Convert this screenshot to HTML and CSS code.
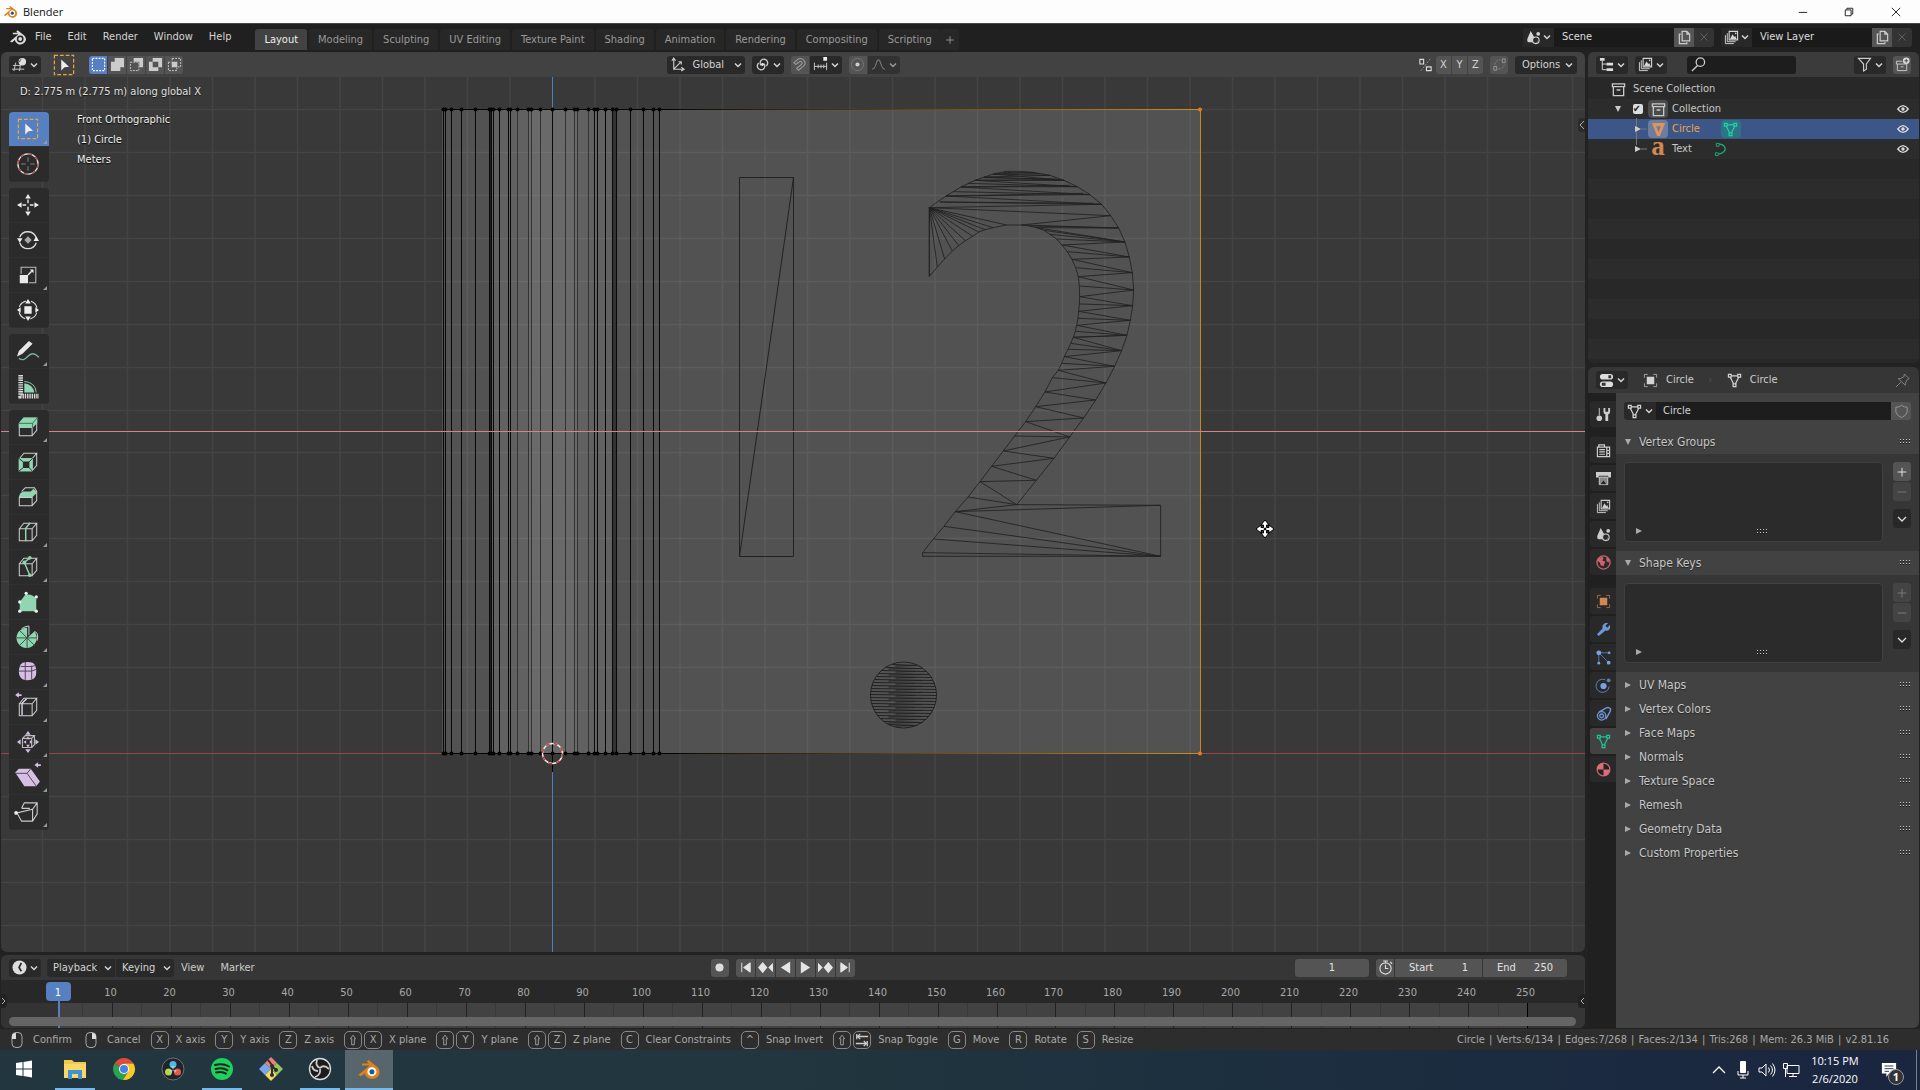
FILE: index.html
```html
<!DOCTYPE html>
<html lang="en">
<head>
<meta charset="utf-8">
<title>Blender</title>
<link rel="stylesheet" href="styles.css">
</head>
<body>
<svg class="sprite" aria-hidden="true">
  <symbol id="chev" viewBox="0 0 8 8"><path d="M1 2.5l3 3 3-3" fill="none" stroke="currentColor" stroke-width="1.5"/></symbol>
  <symbol id="blender" viewBox="0 0 18 18"><path d="M1 13.5L9.5 6.3H3.8V4.8h5L7.3 3.4 8.6 2.3l6.6 5.2a5.6 5.2 0 1 1-9.4 4.6L3 14.5z" fill="currentColor"/><circle cx="11.2" cy="11" r="3.4" class="b-ring"/><circle cx="11.2" cy="11" r="1.9" class="b-eye"/></symbol>
  <symbol id="scene" viewBox="0 0 16 16"><path d="M5 1l4 7-1 5H3C1 13 1 10 2 8z" fill="currentColor"/><circle cx="10.5" cy="11" r="3.5" fill="#2a2a2a" stroke="currentColor" stroke-width="1.2"/><circle cx="13" cy="4" r="2" fill="currentColor"/><path d="M10 13.5a3 3 0 0 0 3-3l-1 2z" fill="currentColor"/></symbol>
  <symbol id="layer" viewBox="0 0 16 16"><path d="M1.5 5.500v9h9M3.500 3.500v9h9" fill="none" stroke="currentColor"/><path d="M5.500 1.500h9v9h-9z" fill="#2a2a2a" stroke="currentColor" stroke-width="1.200"/><path d="M6.500 9.500l2.500-5 2 3 1-1 1.500 3z" fill="currentColor"/><circle cx="12.500" cy="3.500" r=".9" fill="currentColor"/></symbol>
  <symbol id="copy" viewBox="0 0 16 16"><path d="M5.500 1.500h5l3 3v7h-8zM10.500 1.500v3h3" fill="none" stroke="currentColor" stroke-width="1.300"/><path d="M4 4.500H2.500v10h8V13" fill="none" stroke="currentColor" stroke-width="1.300"/></symbol>
  <symbol id="close" viewBox="0 0 16 16"><path d="M4 4l8 8M12 4l-8 8" stroke="currentColor"/></symbol>
  <symbol id="mesh" viewBox="0 0 16 16"><g fill="none" stroke="currentColor" stroke-width="1.300"><path d="M4.500 3h7M3.500 4.500l3.500 7M12.500 4.500l-3.500 7"/><path d="M1.500 1.500h3v3h-3zM11.500 1.500h3v3h-3zM6.500 11.500h3v3h-3z"/></g></symbol>
  <symbol id="collection" viewBox="0 0 16 16"><path d="M1.500 2h13v3h-13zM2.500 5v9.500h11V5M6 8.500h4" fill="none" stroke="currentColor" stroke-width="1.400"/></symbol>
  <symbol id="eye" viewBox="0 0 16 12"><path d="M1 6q7-9 14 0q-7 9-14 0z" fill="none" stroke="#ddd" stroke-width="1.700"/><circle cx="8" cy="6" r="2.300" fill="#ddd"/></symbol>
  <symbol id="right" viewBox="0 0 8 8"><path d="M1 1l6 3-6 3z" fill="currentColor"/></symbol>
  <symbol id="down" viewBox="0 0 8 8"><path d="M1 1h6L4 7z" fill="currentColor"/></symbol>
  <symbol id="grip" viewBox="0 0 11 6"><path d="M0 .5h11M0 3.500h11" stroke="#ccc" stroke-dasharray="1 2"/><path d="M0 1.500h11M0 4.500h11" stroke="#151515" stroke-dasharray="1 2"/></symbol>
  <symbol id="plus" viewBox="0 0 16 16"><path d="M8 3v10M3 8h10" stroke="currentColor" stroke-width="1.200"/></symbol>
  <symbol id="minus" viewBox="0 0 16 16"><path d="M3 8h10" stroke="currentColor" stroke-width="1.200"/></symbol>
  <symbol id="shift" viewBox="0 0 16 16"><path d="M8 2.500l3 4H9.500v7h-3v-7H5z" fill="none" stroke="currentColor"/></symbol>
  <symbol id="objframe" viewBox="0 0 16 16"><path d="M1.500 5V1.500H5M11 1.500h3.500V5M14.500 11v3.500H11M5 14.500H1.500V11" fill="none" stroke="currentColor" opacity=".7"/><path d="M4 4h8v8H4z" fill="currentColor"/></symbol>
  <symbol id="cube" viewBox="0 0 24 24"><path d="M2.500 8.500h14v13h-14zM2.500 8.500l5-6h14l-5 6M21.500 2.500v13l-5 6" fill="none" stroke="#d0d0d0" stroke-width="1.100"/></symbol>
  <symbol id="boxsel" viewBox="0 0 24 24"><path d="M1.500 1.500h21v21h-21z" fill="none" stroke="#e8a83d" stroke-width="1.300" stroke-dasharray="4 2.200"/><path d="M9 6v12l3.500-3.500 5-.5z" fill="#eee"/></symbol>
</svg>

<header class="titlebar">
  <svg class="i16 blender-color"><use href="#blender"/></svg><span>Blender</span>
  <div class="winbtns">
    <button aria-label="Minimize"><svg viewBox="0 0 12 12"><path d="M1 6.500h10" stroke="#000"/></svg></button>
    <button aria-label="Restore"><svg viewBox="0 0 12 12"><path d="M1.500 3.500h7v7h-7zM3.500 3V1.500h7v7H9" fill="none" stroke="#000"/></svg></button>
    <button aria-label="Close"><svg viewBox="0 0 12 12"><path d="M1 1l10 10M11 1L1 11" stroke="#000"/></svg></button>
  </div>
</header>

<nav class="topbar">
  <svg class="i18 blender-white"><use href="#blender"/></svg>
  <div class="menus"><button>File</button><button>Edit</button><button>Render</button><button>Window</button><button>Help</button></div>
  <div class="tabs"><button class="on">Layout</button><button>Modeling</button><button>Sculpting</button><button>UV Editing</button><button>Texture Paint</button><button>Shading</button><button>Animation</button><button>Rendering</button><button>Compositing</button><button>Scripting</button><button class="add" aria-label="Add workspace"><svg class="i12"><use href="#plus" /></svg></button></div>
  <div class="idrow">
    <div class="idblock"><button class="pick" aria-label="Browse scene"><svg class="i16"><use href="#scene"/></svg><svg class="i8"><use href="#chev"/></svg></button><input aria-label="Scene name" value="Scene"><button class="lit" aria-label="New scene"><svg class="i16"><use href="#copy"/></svg></button><button class="dim" aria-label="Remove scene"><svg class="i14"><use href="#close"/></svg></button></div>
    <div class="idblock"><button class="pick" aria-label="Browse view layer"><svg class="i16"><use href="#layer"/></svg><svg class="i8"><use href="#chev"/></svg></button><input aria-label="View layer name" value="View Layer"><button class="lit" aria-label="New view layer"><svg class="i16"><use href="#copy"/></svg></button><button class="dim" aria-label="Remove view layer"><svg class="i14"><use href="#close"/></svg></button></div>
  </div>
</nav>

<main class="work">
  <div class="left">
    <section class="view3d">
      <div class="viewhead">
        <div class="grp start">
          <button class="drop" aria-label="Editor type"><svg class="i16" viewBox="0 0 16 16"><path d="M4 6L2 15M9 8l-1 7M1 9h8M0 13h13" stroke="#ccc" fill="none"/><circle cx="11" cy="5" r="4" fill="#ddd"/><path d="M10 2.500a3 3 0 0 0-2 3" stroke="#444" fill="none"/></svg><svg class="i8"><use href="#chev"/></svg></button>
          <svg class="i22"><use href="#boxsel"/></svg>
          <div class="seg modes">
            <button class="blue" aria-label="Set"><svg class="i16" viewBox="0 0 16 16"><path d="M1.500 1.500h13v13h-13z" fill="none" stroke="#fff" stroke-width="1.300" stroke-dasharray="2 1.300"/></svg></button>
            <button aria-label="Extend"><svg class="i16" viewBox="0 0 16 16"><path d="M5 1h10v10h-4v4H1V5h4z" fill="#ccc"/></svg></button>
            <button aria-label="Subtract"><svg class="i16" viewBox="0 0 16 16"><path d="M5 1h10v10h-4V5H5z" fill="#ccc"/><path d="M1.500 5.500h9v9h-9z" fill="none" stroke="#ccc" stroke-dasharray="2 1.200"/></svg></button>
            <button aria-label="Invert"><svg class="i16" viewBox="0 0 16 16"><path d="M5 1h10v10h-4v4H1V5h4zM5 5v6h6V5z" fill="#ccc" fill-rule="evenodd"/></svg></button>
            <button aria-label="Intersect"><svg class="i16" viewBox="0 0 16 16"><path d="M5 5h6v6H5z" fill="#ccc"/><path d="M5.500 1.500h9v9h-3M1.500 5.500H5M1.500 5.500v9h9v-3M5.500 1.500V5" fill="none" stroke="#ccc" stroke-dasharray="2 1.200"/></svg></button>
          </div>
        </div>
        <div class="grp middle">
          <button class="drop global"><svg class="i16" viewBox="0 0 16 16"><path d="M4 2v11h10M4 13l8-8M2 4l2-3 2 3M9 5h3v3M12 11l3 2-3 2" fill="none" stroke="#ccc" stroke-width="1.200"/></svg><span>Global</span><svg class="i8"><use href="#chev"/></svg></button>
          <button class="drop" aria-label="Pivot point"><svg class="i16" viewBox="0 0 16 16"><path d="M6.500 9A4 4 0 1 1 12 9.500M9.500 7A4 4 0 1 1 4 6.500" fill="none" stroke="#ccc" stroke-width="1.400"/><circle cx="8" cy="8" r="1.500" fill="#eee"/></svg><svg class="i8"><use href="#chev"/></svg></button>
          <div class="seg"><button aria-label="Snap"><svg class="i16" viewBox="0 0 16 16"><path d="M2 6l5-4c6-2 9 5 5 8l-5 4-2-2 5-4c2-2 0-4-2-3L4 8z" fill="none" stroke="#999" stroke-width="1.200"/></svg></button><button class="drop" aria-label="Snap to"><svg class="i16" viewBox="0 0 16 16"><path d="M1.500 6v8M14.500 6v8M5.500 8v4M8.500 8v4M11.500 8v4M1 10h14" stroke="#ccc" fill="none"/><path d="M11 0h4v4h-4z" fill="#eee"/></svg><svg class="i8"><use href="#chev"/></svg></button></div>
          <div class="seg"><button aria-label="Proportional editing"><svg class="i16" viewBox="0 0 16 16"><circle cx="8" cy="8" r="6.500" fill="none" stroke="#777"/><circle cx="8" cy="8" r="2.200" fill="#ccc"/></svg></button><button class="drop faded" aria-label="Falloff"><svg class="i16" viewBox="0 0 16 16"><path d="M1 13c5 0 4-10 7-10s2 10 7 10" fill="none" stroke="#999" stroke-width="1.200"/></svg><svg class="i8"><use href="#chev"/></svg></button></div>
        </div>
        <div class="grp end">
          <svg class="i16" viewBox="0 0 16 16"><path d="M2 2.500h4v5H2zM9 10.500h5v4H9z" fill="none" stroke="#ddd" stroke-width="1.200"/><path d="M13 2L3 15" stroke="#999" stroke-dasharray="2 1.500"/></svg>
          <div class="seg xyz"><button>X</button><button>Y</button><button>Z</button></div>
          <div class="seg one"><button aria-label="Auto merge"><svg class="i16" viewBox="0 0 16 16"><path d="M11 2h3v4h-3zM2 10h3v4H2z" fill="none" stroke="#999"/><path d="M3 8q1-5 6-5M7 13q5-1 6-5" fill="none" stroke="#888" stroke-dasharray="2 1.500"/></svg></button></div>
          <button class="drop options"><span>Options</span><svg class="i8"><use href="#chev"/></svg></button>
        </div>
      </div>
      <div class="canvas">
        <svg class="scene" id="scene3d" aria-label="3D viewport">
          <defs>
            <linearGradient id="edge" gradientUnits="userSpaceOnUse" x1="660" y1="0" x2="1200" y2="0"><stop offset="0" stop-color="#000"/><stop offset=".12" stop-color="#1e1508"/><stop offset="1" stop-color="#cf8c1f"/></linearGradient>
          </defs>
          <rect x="442" y="32" width="758" height="644" fill="#525252"/>
          <rect x="492" y="32" width="120" height="644" fill="#616161"/>
          <rect x="528" y="32" width="49" height="644" fill="#696969"/>
          <g id="grid"></g>
          <path d="M0 676.500H442M1200 676.500H4000" stroke="#9c424a"/>
          <path d="M552.500 0v32M552.500 680V2000" stroke="#4a80bd"/>
          <g id="edges"></g>
          <path d="M442 32.500H660M442 676.500H660" stroke="#000"/>
          <path d="M660 32h540v1H660zM660 676h540v1H660z" fill="url(#edge)"/>
          <path d="M1200.500 32v645" stroke="#c9871a"/>
          <circle cx="1200" cy="32.500" r="2" fill="#f07818"/><circle cx="1200" cy="676.500" r="2" fill="#f07818"/>
          <g fill="none" stroke="#222">
            <path d="M739.500 100.500h54v379h-54zM739.500 479.500l54-379"/>
            <g id="numeral" transform="translate(860 63) scale(.3333)" stroke-width="2.600"></g>
            <circle cx="903.500" cy="618" r="33"/><g id="dot"></g>
          </g>
          <path d="M0 354.500H4000" stroke="#d0848f"/>
          <path d="M552.500 667v28" stroke="#000"/>
          <circle cx="552.500" cy="676.500" r="10" fill="none" stroke="#eee" stroke-width="1.400"/><circle cx="552.500" cy="676.500" r="10" fill="none" stroke="#c8383c" stroke-width="1.400" stroke-dasharray="4 4"/>
          <g transform="translate(1265 452)" fill="#fff" stroke="#000" stroke-width="1"><path d="M0-9L4-4H1.500v2.500H4V-4L9 0 4 4V1.500H1.500V4H4L0 9-4 4h2.500V1.500H-4V4L-9 0l5-4v2.500h2.500V-4H-4z"/><circle r="1" fill="#000"/></g>
        </svg>
        <p class="hint">D: 2.775 m (2.775 m) along global X</p>
        <div class="overlay">
          <div class="toolbar" role="toolbar" aria-label="Tools">
            <div class="tools">
              <button class="blue more" aria-label="Select box"><svg class="i24"><use href="#boxsel"/></svg></button>
              <button aria-label="Cursor"><svg class="i24" viewBox="0 0 24 24"><circle cx="12" cy="12" r="11" fill="none" stroke="#ddd" stroke-width="1.500"/><circle cx="12" cy="12" r="11" fill="none" stroke="#b5484d" stroke-width="1.500" stroke-dasharray="4.300 4.300"/><path d="M12 4.500v5M12 14.500v5M4.500 12h5M14.500 12h5" stroke="#888"/></svg></button>
            </div>
            <div class="tools">
              <button aria-label="Move"><svg class="i24" viewBox="0 0 24 24"><path d="M12 0l3 5H9zM12 24l3-5H9zM0 12l5-3v6zM24 12l-5-3v6z" fill="#eee"/><path d="M12 6v4M12 14v4M6 12h4M14 12h4" stroke="#eee" stroke-width="1.500"/></svg></button>
              <button aria-label="Rotate"><svg class="i24" viewBox="0 0 24 24"><path d="M3 9a9.500 9.500 0 0 1 18 1M21 15a9.500 9.500 0 0 1-18 0" fill="none" stroke="#ddd" stroke-width="1.400"/><path d="M0 10h6l-3 5zM18 13h6l-3-5z" fill="#eee"/><path d="M12 8l4 4-4 4-4-4z" fill="#aaa"/></svg></button>
              <button class="more" aria-label="Scale"><svg class="i24" viewBox="0 0 24 24"><path d="M4.500 11V3.500h16v17H13" fill="none" stroke="#bbb" stroke-width="1.200"/><path d="M3 12h9v9H3z" fill="#e8e8e8"/><path d="M12 12l4-4" stroke="#eee" stroke-width="1.500"/><path d="M18 6v4l-4-4z" fill="#eee"/></svg></button>
              <button aria-label="Transform"><svg class="i24" viewBox="0 0 24 24"><circle cx="12" cy="12" r="10" fill="none" stroke="#ddd" stroke-width="1.200" stroke-dasharray="10 5.700" stroke-dashoffset="-3"/><path d="M8 8h8v8H8z" fill="#eee"/><path d="M12 0l3 5H9zM12 24l3-5H9zM0 12l4-3v6zM24 12l-4-3v6z" fill="#eee"/></svg></button>
            </div>
            <div class="tools">
              <button class="more" aria-label="Annotate"><svg class="i24" viewBox="0 0 24 24"><path d="M0 18l2-6L13 1l4 3L6 15z" fill="#e8e8e8"/><path d="M2 20c8 5 9-5 15-5 3 0 5 2 7 4" fill="none" stroke="#72b897" stroke-width="1.400"/></svg></button>
              <button aria-label="Measure"><svg class="i24" viewBox="0 0 24 24"><path d="M4 0v23h20" fill="none" stroke="#ddd" stroke-width="5" stroke-dasharray="1.500 1"/><path d="M8 19V9q9 1 11 10z" fill="#90d6b0"/><path d="M8 7q12 1 13 12" fill="none" stroke="#90d6b0"/></svg></button>
            </div>
            <div class="tools">
              <button class="more" aria-label="Extrude"><svg class="i24" viewBox="0 0 24 24"><use href="#cube"/><path d="M2 13V7.500l5-6h15v6l-5 5.500z" fill="#90d6b0"/><path d="M2 8h15l5-6M17 8v5" stroke="#3a6a52" fill="none"/></svg></button>
              <button aria-label="Inset"><svg class="i24" viewBox="0 0 24 24"><use href="#cube"/><path d="M2 8h15v14H2zM7 12v6h6v-6z" fill="#90d6b0" fill-rule="evenodd"/><path d="M2 8l5 4M17 8l-4 4M2 22l5-4M17 22l-4-4M7 12v6h6v-6z" stroke="#222" fill="none"/></svg></button>
              <button aria-label="Bevel"><svg class="i24" viewBox="0 0 24 24"><path d="M2.500 12.500v9h14v-9zM5 6l4-4h10l2.500 4v10l-5 5.500" fill="none" stroke="#d0d0d0" stroke-width="1.100"/><path d="M2 12q1-5 5-6h8l3-3 4 4-5 5z" fill="#90d6b0"/></svg></button>
              <button class="more" aria-label="Loop cut"><svg class="i24" viewBox="0 0 24 24"><use href="#cube"/><path d="M9.500 22V8l5-6" fill="none" stroke="#90d6b0" stroke-width="1.600"/></svg></button>
              <button class="more" aria-label="Knife"><svg class="i24" viewBox="0 0 24 24"><use href="#cube"/><path d="M14 2L8 7l6 14" fill="none" stroke="#90d6b0" stroke-width="1.600"/><g fill="#90d6b0"><circle cx="14" cy="2" r="2"/><circle cx="8" cy="7" r="2"/><circle cx="14" cy="21" r="2"/></g></svg></button>
              <button aria-label="Poly build"><svg class="i24" viewBox="0 0 24 24"><path d="M3 12l6-8q9-1 12 5v13H3z" fill="#90d6b0"/><g fill="#eee"><circle cx="3" cy="12" r="1.800"/><circle cx="10" cy="2.500" r="1.800"/><circle cx="21" cy="6.500" r="1.800"/><circle cx="3" cy="22" r="1.800"/><circle cx="21" cy="22" r="1.800"/></g></svg></button>
              <button class="more" aria-label="Spin"><svg class="i24" viewBox="0 0 24 24"><path d="M11 13V2A11 11 0 1 0 19 6z" fill="#90d6b0"/><path d="M11 13v11M0 13h22M3 5l16 16M3 21l8-8" stroke="#2e4e3e" fill="none"/><path d="M5 3q4-3 8-3v10M19 6q5 1 3 10" fill="none" stroke="#ddd"/></svg></button>
              <button class="more" aria-label="Smooth"><svg class="i24" viewBox="0 0 24 24"><path d="M6 2q6-2 11 0 4 2 4 10 0 6-4 8-6 2-11 0-4-3-4-8 0-7 4-10z" fill="#d5bfe2"/><path d="M2 11h14l5-2M9 1v20M16 5v15M4 6h12l4-1" stroke="#4a3c55" fill="none"/></svg></button>
              <button class="more" aria-label="Edge slide"><svg class="i24" viewBox="0 0 24 24"><use href="#cube"/><path d="M5.500 21V8l5-5" fill="none" stroke="#e3d3ef" stroke-width="1.500"/><path d="M-2-1l4-3v2h3v2H2v2z" fill="#d5bfe2"/></svg></button>
              <button class="more" aria-label="Shrink"><svg class="i24" viewBox="0 0 24 24"><path d="M6 8h10v10H6zM6 8l3-3h10l-3 3M19 5v10l-3 3" fill="none" stroke="#bbb" stroke-width="1.200"/><path d="M12 0l3 4H9zM12 24l3-4H9zM0 12l4-3v6zM24 12l-4-3v6zM12 6l2 3h-4zM12 18l2-3h-4zM7 12l3-2v4zM17 12l-3-2v4z" fill="#d5bfe2"/></svg></button>
              <button class="more" aria-label="Shear"><svg class="i24" viewBox="0 0 24 24"><path d="M-2 7l4-4h13l10 14-4 5H8z" fill="#d5bfe2"/><path d="M-2 8h13l10 14M11 8l4-5" fill="none" stroke="#4a3c55"/><path d="M19-1l4-3v2h3v2h-3v2z" fill="#d5bfe2"/></svg></button>
              <button class="more" aria-label="Rip"><svg class="i24" viewBox="0 0 24 24"><path d="M5 8l3-6h14v12l-5 8H5L0 13l17-4V22M17 9l5-7M5 8h9" fill="none" stroke="#ccc" stroke-width="1.200"/><circle cx="-1" cy="13" r="2" fill="#eee"/></svg></button>
            </div>
          </div>
          <div class="viewinfo"><p>Front Orthographic</p><p>(1) Circle</p><p>Meters</p></div>
        </div>
        <button class="ntab" aria-label="Show sidebar"><svg class="i8" viewBox="0 0 8 8"><path d="M6 0L2 4l4 4" fill="none" stroke="#aaa"/></svg></button>
      </div>
    </section>

    <section class="timeline">
      <div class="timehead">
        <div class="grp tleft">
          <button class="drop" aria-label="Editor type"><svg class="i16" viewBox="0 0 16 16"><circle cx="8" cy="8" r="7.500" fill="#ddd"/><path d="M10 3L7.500 8l2.500 4" fill="none" stroke="#2a2a2a" stroke-width="1.800"/></svg><svg class="i8"><use href="#chev"/></svg></button>
          <div class="seg"><button class="drop play"><span>Playback</span><svg class="i8"><use href="#chev"/></svg></button><button class="drop key"><span>Keying</span><svg class="i8"><use href="#chev"/></svg></button></div>
          <div class="menus"><button>View</button><button>Marker</button></div>
        </div>
        <div class="grp transport">
          <div class="seg one"><button aria-label="Auto keying"><svg class="i16" viewBox="0 0 16 16"><circle cx="8" cy="8" r="4.300" fill="#ddd"/></svg></button></div>
          <div class="seg six">
            <button aria-label="Jump to start"><svg class="i16" viewBox="0 0 16 16"><path d="M4 3v10M13 3L6 8l7 5z" fill="#e5e5e5" stroke="#e5e5e5"/></svg></button>
            <button aria-label="Previous keyframe"><svg class="i16" viewBox="0 0 16 16"><path d="M5 2l5 6-5 6-5-6zM16 3v10l-5-5z" fill="#e5e5e5"/></svg></button>
            <button aria-label="Play reverse"><svg class="i16" viewBox="0 0 16 16"><path d="M13 1.500v13L3 8z" fill="#e5e5e5"/></svg></button>
            <button aria-label="Play"><svg class="i16" viewBox="0 0 16 16"><path d="M3 1.500v13L13 8z" fill="#e5e5e5"/></svg></button>
            <button aria-label="Next keyframe"><svg class="i16" viewBox="0 0 16 16"><path d="M11 2l5 6-5 6-5-6zM0 3v10l5-5z" fill="#e5e5e5"/></svg></button>
            <button aria-label="Jump to end"><svg class="i16" viewBox="0 0 16 16"><path d="M12 3v10M3 3l7 5-7 5z" fill="#e5e5e5" stroke="#e5e5e5"/></svg></button>
          </div>
        </div>
        <div class="grp frames">
          <input class="num cur" aria-label="Current frame" value="1">
          <div class="seg">
            <button aria-label="Use preview range"><svg class="i16" viewBox="0 0 16 16"><circle cx="8" cy="9" r="6" fill="none" stroke="#ddd" stroke-width="1.200"/><path d="M8 5v4h3M8 3V1M5.500 1h5M13 2l2 2" fill="none" stroke="#ddd" stroke-width="1.200"/></svg></button>
            <label class="num st">Start<input value="1"></label>
            <label class="num en">End<input value="250"></label>
          </div>
        </div>
      </div>
      <svg class="ruler" id="ruler"></svg>
      <div class="scroll"></div>
    </section>
  </div>

  <aside class="right">
    <section class="outliner">
      <div class="outhead">
        <button class="drop" aria-label="Editor type"><svg class="i16" viewBox="0 0 16 16"><path d="M1 1h5v3H1zM8 6h7v3H8zM8 12h7v3H8z" fill="#ddd"/><path d="M3.500 4v9.500H8M3.500 7.500H8" fill="none" stroke="#ddd"/></svg><svg class="i8"><use href="#chev"/></svg></button>
        <button class="drop" aria-label="Display mode"><svg class="i16"><use href="#layer"/></svg><svg class="i8"><use href="#chev"/></svg></button>
        <label class="search"><svg class="i16" viewBox="0 0 16 16"><circle cx="10" cy="5.500" r="4.500" fill="none" stroke="#ccc" stroke-width="1.400"/><path d="M7 9l-6 6" stroke="#ccc" stroke-width="1.500"/></svg><input aria-label="Search"></label>
        <button class="drop filter" aria-label="Filter"><svg class="i16" viewBox="0 0 16 16"><path d="M1.500 1.500h13L10 7.500V13l-3 2V7.500z" fill="none" stroke="#ccc" stroke-width="1.200"/></svg><svg class="i8"><use href="#chev"/></svg></button>
        <div class="seg one"><button aria-label="New collection"><svg class="i16" viewBox="0 0 16 16"><path d="M8 4.500H1.500v3h11M2.500 7.500v7h10v-7M6 10.500h3" fill="none" stroke="#ccc"/><circle cx="12" cy="4" r="3.500" fill="#ddd"/><path d="M12 2v4M10 4h4" stroke="#444"/></svg></button></div>
      </div>
      <ul class="tree">
        <li class="r1"><svg class="i16"><use href="#collection"/></svg><span>Scene Collection</span></li>
        <li class="r2"><svg class="i8 tri"><use href="#down"/></svg><input type="checkbox" checked aria-label="Collection enabled"><i class="badge grey"><svg class="i16"><use href="#collection"/></svg></i><span>Collection</span><svg class="eye"><use href="#eye"/></svg></li>
        <li class="r3 sel"><svg class="i8 tri" viewBox="0 0 8 8"><path d="M2.500-7V20M7 4h6" stroke="#777" fill="none"/><use href="#right"/></svg><i class="badge light"><svg class="i16" viewBox="0 0 16 16"><path d="M1 1h14L9.500 15h-3zM5.500 4.500L8 11l2.500-6.500z" fill="#e0935a" fill-rule="evenodd"/></svg></i><span>Circle</span><i class="badge teal"><svg class="i16"><use href="#mesh"/></svg></i><svg class="eye"><use href="#eye"/></svg></li>
        <li class="r3"><svg class="i8 tri" viewBox="0 0 8 8"><path d="M7 4h6" stroke="#777" fill="none"/><use href="#right"/></svg><b>a</b><span>Text</span><svg class="i16 curve" viewBox="0 0 16 16"><path d="M4.500 2.500C11 1 17 10 5 13" fill="none" stroke="#1dae82" stroke-width="1.300"/><path d="M2.500 1.500h3v3h-3zM1.500 11.500h3v3h-3z" fill="#262626" stroke="#1dae82"/></svg><svg class="eye"><use href="#eye"/></svg></li>
      </ul>
    </section>

    <section class="props">
      <div class="prophead">
        <button class="drop" aria-label="Editor type"><svg class="i16" viewBox="0 0 16 16"><rect x="1" y="1" width="14" height="6" rx="3" fill="#ddd"/><rect x="1" y="9" width="14" height="6" rx="3" fill="#ddd"/><path d="M10 2.500h3v3h-3zM3 10.500h4v3H3z" fill="#333"/></svg><svg class="i8"><use href="#chev"/></svg></button>
        <svg class="i16"><use href="#objframe"/></svg><span>Circle</span><em>›</em><svg class="i16"><use href="#mesh"/></svg><span>Circle</span>
        <svg class="i16 pin" viewBox="0 0 16 16"><path d="M10 1l5 5-2 1-2 4v2L3.500 6h2l4-2zM6 10l-5 5" fill="none" stroke="#888"/></svg>
      </div>
      <div class="propmain">
        <nav class="ptabs">
          <button aria-label="Tool"><svg class="i16" viewBox="0 0 16 16"><path d="M3.500 1v8" stroke="#ccc"/><circle cx="3.500" cy="12" r="3" fill="#ccc"/><path d="M8 1v4q0 2 2 3v7h3V8q2-1 2-3V1l-2 0v4h-3V1z" fill="#ccc"/></svg></button>
          <button class="gap" aria-label="Render"><svg class="i16" viewBox="0 0 16 16"><path d="M1.500 4.500h10v10h-10zM3 4V2h6v2M11.500 4.500h3v10h-3M3.500 7h6M3.500 9.500h6M3.500 12h6M12 8h2M12 11h2" fill="none" stroke="#ccc" stroke-width="1.300"/></svg></button>
          <button aria-label="Output"><svg class="i16" viewBox="0 0 16 16"><path d="M0 1h16v6h-3V5H3v2H0z" fill="#ccc"/><path d="M3.500 6.500h9v8h-9z" fill="#888" stroke="#ccc"/><path d="M5 14l3-4 3 4z" fill="#222"/></svg></button>
          <button aria-label="View layer"><svg class="i16"><use href="#layer"/></svg></button>
          <button aria-label="Scene"><svg class="i16"><use href="#scene"/></svg></button>
          <button aria-label="World"><svg class="i16" viewBox="0 0 16 16"><circle cx="8" cy="8" r="7" fill="none" stroke="#c8646c" stroke-width="1.400"/><path d="M2 4q4-3 6-1l-1 3 3 1-2 5-3-1-1-3-3-2zM11 2l4 3-2 3-2-2zM1 15l2-3M15 1l-2 3" fill="#c8646c"/></svg></button>
          <button class="gap2 orange" aria-label="Object"><svg class="i16"><use href="#objframe"/></svg></button>
          <button aria-label="Modifiers"><svg class="i16" viewBox="0 0 16 16"><path d="M1 13l6-6q-1-4 3-6h3l-3 3 2 2 3-3v3q-1 4-5 3l-7 6z" fill="#6e97d5"/></svg></button>
          <button aria-label="Particles"><svg class="i16" viewBox="0 0 16 16"><path d="M3 3h11M3 3v11M3 3l10 10" stroke="#557bb0" /><g fill="#7aa2df"><circle cx="3" cy="3" r="2.600"/><circle cx="14" cy="3" r="1.500"/><circle cx="3" cy="14" r="1.500"/><circle cx="13.500" cy="13.500" r="2"/></g></svg></button>
          <button aria-label="Physics"><svg class="i16" viewBox="0 0 16 16"><path d="M10 2A7 7 0 1 0 14 9" fill="none" stroke="#6082b5"/><circle cx="8" cy="8.500" r="3.300" fill="#7aa2df"/><circle cx="13.500" cy="2.500" r="2" fill="#6082b5"/></svg></button>
          <button aria-label="Constraints"><svg class="i16" viewBox="0 0 16 16"><path d="M10.500 14L15 6c2-4-2-5-4-4L3 6.500" fill="none" stroke="#6e97d5" stroke-width="1.500"/><circle cx="6" cy="10.500" r="4.500" fill="none" stroke="#6e97d5" stroke-width="1.400"/><circle cx="6" cy="10.500" r="2" fill="none" stroke="#6e97d5" stroke-width="1.400"/></svg></button>
          <button class="on" aria-label="Object data"><svg class="i16"><use href="#mesh"/></svg></button>
          <button aria-label="Material"><svg class="i16" viewBox="0 0 16 16"><circle cx="8" cy="8" r="6.800" fill="#222" stroke="#c8646c" stroke-width="1.400"/><path d="M8 8V1a7 7 0 0 0-7 7zM8 8v7a7 7 0 0 0 7-7z" fill="#d86e77"/></svg></button>
        </nav>
        <div class="panels">
          <div class="datarow"><button class="drop" aria-label="Browse mesh"><svg class="i16"><use href="#mesh"/></svg><svg class="i8"><use href="#chev"/></svg></button><input aria-label="Mesh name" value="Circle"><button class="lit" aria-label="Fake user"><svg class="i16" viewBox="0 0 16 16"><path d="M8 1.500q3 2 6 2v5q-1 4-6 6-5-2-6-6v-5q3 0 6-2z" fill="none" stroke="#999"/></svg></button></div>
          <h3><svg class="i8"><use href="#down"/></svg><span>Vertex Groups</span><svg class="grip"><use href="#grip"/></svg></h3>
          <div class="pbody"><div class="list"><svg class="i8"><use href="#right"/></svg><svg class="grip"><use href="#grip"/></svg></div><div class="side"><button aria-label="Add"><svg class="i14"><use href="#plus"/></svg></button><button class="off" aria-label="Remove"><svg class="i14"><use href="#minus"/></svg></button><button class="drop" aria-label="Specials"><svg class="i10" viewBox="0 0 10 10"><path d="M1 3l4 4 4-4" fill="none" stroke="#ddd" stroke-width="1.300"/></svg></button></div></div>
          <h3><svg class="i8"><use href="#down"/></svg><span>Shape Keys</span><svg class="grip"><use href="#grip"/></svg></h3>
          <div class="pbody"><div class="list"><svg class="i8"><use href="#right"/></svg><svg class="grip"><use href="#grip"/></svg></div><div class="side"><button class="off" aria-label="Add"><svg class="i14"><use href="#plus"/></svg></button><button class="off" aria-label="Remove"><svg class="i14"><use href="#minus"/></svg></button><button class="drop" aria-label="Specials"><svg class="i10" viewBox="0 0 10 10"><path d="M1 3l4 4 4-4" fill="none" stroke="#ddd" stroke-width="1.300"/></svg></button></div></div>
          <div class="closed">
          <h3><svg class="i8"><use href="#right"/></svg><span>UV Maps</span><svg class="grip"><use href="#grip"/></svg></h3>
          <h3><svg class="i8"><use href="#right"/></svg><span>Vertex Colors</span><svg class="grip"><use href="#grip"/></svg></h3>
          <h3><svg class="i8"><use href="#right"/></svg><span>Face Maps</span><svg class="grip"><use href="#grip"/></svg></h3>
          <h3><svg class="i8"><use href="#right"/></svg><span>Normals</span><svg class="grip"><use href="#grip"/></svg></h3>
          <h3><svg class="i8"><use href="#right"/></svg><span>Texture Space</span><svg class="grip"><use href="#grip"/></svg></h3>
          <h3><svg class="i8"><use href="#right"/></svg><span>Remesh</span><svg class="grip"><use href="#grip"/></svg></h3>
          <h3><svg class="i8"><use href="#right"/></svg><span>Geometry Data</span><svg class="grip"><use href="#grip"/></svg></h3>
          <h3><svg class="i8"><use href="#right"/></svg><span>Custom Properties</span><svg class="grip"><use href="#grip"/></svg></h3>
          </div>
        </div>
      </div>
    </section>
  </aside>
</main>

<footer class="status">
  <div class="keys">
    <div><svg class="i18" viewBox="0 0 18 18"><rect x="4" y="1.500" width="10" height="15" rx="4" fill="none" stroke="#aaa"/><path d="M4 8V5q0-3 4-3v6z" fill="#ddd"/></svg><span>Confirm</span></div>
    <div><svg class="i18" viewBox="0 0 18 18"><rect x="4" y="1.500" width="10" height="15" rx="4" fill="none" stroke="#aaa"/><path d="M14 8V5q0-3-4-3v6z" fill="#ddd"/></svg><span>Cancel</span></div>
    <div><kbd>X</kbd><span>X axis</span></div><div><kbd>Y</kbd><span>Y axis</span></div><div><kbd>Z</kbd><span>Z axis</span></div>
    <div><kbd><svg class="i14"><use href="#shift"/></svg></kbd><kbd>X</kbd><span>X plane</span></div>
    <div><kbd><svg class="i14"><use href="#shift"/></svg></kbd><kbd>Y</kbd><span>Y plane</span></div>
    <div><kbd><svg class="i14"><use href="#shift"/></svg></kbd><kbd>Z</kbd><span>Z plane</span></div>
    <div><kbd>C</kbd><span>Clear Constraints</span></div><div><kbd>^</kbd><span>Snap Invert</span></div>
    <div><kbd><svg class="i14"><use href="#shift"/></svg></kbd><kbd><svg class="i14" viewBox="0 0 16 16"><path d="M2 1v6M3 4h12M6 1L3 4l3 3M14 9v6M1 12h12M10 9l3 3-3 3" fill="none" stroke="#ccc" stroke-width="1.500"/></svg></kbd><span>Snap Toggle</span></div>
    <div><kbd>G</kbd><span>Move</span></div><div><kbd>R</kbd><span>Rotate</span></div><div><kbd>S</kbd><span>Resize</span></div>
  </div>
  <p class="stats">Circle <i>|</i> Verts:6/134 <i>|</i> Edges:7/268 <i>|</i> Faces:2/134 <i>|</i> Tris:268 <i>|</i> Mem: 26.3 MiB <i>|</i> v2.81.16</p>
</footer>

<div class="taskbar">
  <button class="startbtn" aria-label="Start"><svg viewBox="0 0 24 24"><path d="M4 6l6.500-1v6.500H4zM11.500 4.900L20 3.500v8h-8.500zM4 12.500h6.500V19L4 18zM11.500 12.500H20v8l-8.500-1.400z" fill="#fff"/></svg></button>
  <button class="run" aria-label="File Explorer"><svg viewBox="0 0 24 24"><path d="M1 3h8l2 2h12v16H1z" fill="#f2c84b"/><path d="M1 7h22v14H1z" fill="#fbd768"/><path d="M5 13h14v9h-4v-5H9v5H5z" fill="#3c93d8"/></svg></button>
  <button aria-label="Chrome"><svg viewBox="0 0 24 24"><path d="M12 12L2.500 6.500A11 11 0 0 1 21.500 6.500H12z" fill="#e04a3c"/><path d="M12 12L2.500 6.500A11 11 0 0 0 11 23l5-8z" fill="#2ba24c"/><path d="M12 6.500h9.500A11 11 0 0 1 11 23l5-8z" fill="#fbc926"/><circle cx="12" cy="12" r="5" fill="#fff"/><circle cx="12" cy="12" r="4" fill="#4a80ee"/></svg></button>
  <button aria-label="DaVinci Resolve"><svg viewBox="0 0 24 24"><circle cx="12" cy="12" r="11" fill="#1c252c" stroke="#7a6a6f"/><circle cx="12" cy="7.500" r="3.500" fill="#4fb8e4"/><circle cx="7.500" cy="15" r="3.500" fill="#b7d74a"/><circle cx="16.500" cy="15" r="3.500" fill="#e8574d"/><path d="M10 9h4l-2 4zM8 13l4 0-2 3zM16 13h-4l2 3z" fill="#ddd" opacity=".6"/></svg></button>
  <button class="run" aria-label="Spotify"><svg viewBox="0 0 24 24"><circle cx="12" cy="12" r="11" fill="#1ed05e"/><path d="M5 8q8-2 14 1.500M5.500 12q7-2 12 1.300M6 15.500q6-1.500 10 1.200" fill="none" stroke="#11251a" stroke-width="2" stroke-linecap="round"/></svg></button>
  <button aria-label="Git"><svg viewBox="0 0 24 24"><path d="M12 0l6 6-6 6-6-6z" fill="#ee8076"/><path d="M18 6l6 6-6 6-6-6z" fill="#8fc95f"/><path d="M6 6l6 6-6 6-6-6z" fill="#74a9ee"/><path d="M12 12l6 6-6 6-6-6z" fill="#f4d964"/><path d="M9 3l4 5v10M13 9l4 4" fill="none" stroke="#2d2d2d" stroke-width="2"/><circle cx="13" cy="9" r="2" fill="#2d2d2d"/><circle cx="17" cy="13" r="2" fill="#2d2d2d"/><circle cx="13" cy="18" r="2" fill="#2d2d2d"/></svg></button>
  <button class="run" aria-label="OBS"><svg viewBox="0 0 24 24"><circle cx="12" cy="12" r="10.500" fill="#1e1b1c" stroke="#ddd" stroke-width="1.300"/><path d="M9 3q-2 6 3 8M21 12q-5-5-9-1M7 20q6-2 5-8M4 9q1 5 6 5" fill="none" stroke="#ccc" stroke-width="1.800"/></svg></button>
  <button class="run active" aria-label="Blender"><svg class="blender-color" viewBox="0 0 24 24"><use href="#blender"/></svg></button>
  <div class="tray">
    <svg viewBox="0 0 18 18"><path d="M3 12l6-6 6 6" fill="none" stroke="#fff" stroke-width="1.300"/></svg>
    <svg viewBox="0 0 18 18"><rect x="6" y="0" width="6" height="12" rx="1" fill="#fff"/><path d="M4 10v4h10v-4M9 14v3M6 17h6" fill="none" stroke="#fff"/></svg>
    <svg viewBox="0 0 18 18"><path d="M1 7h3l4-4v12l-4-4H1zM10.500 6.500q2 2.500 0 5M12.500 4.500q4 4.500 0 9M14.500 2.500q5 6.500 0 13" fill="none" stroke="#fff"/></svg>
    <svg viewBox="0 0 18 18"><path d="M5 4.500h12v8H5zM11 12.500v3M7 15.500h8M1.500 2.500h4v5h-4zM3.500 8v8" fill="none" stroke="#fff"/></svg>
    <div class="clock"><time>10:15 PM</time><span>2/6/2020</span></div>
    <div class="notif"><svg viewBox="0 0 18 18"><path d="M1 1h16v12H9l-3 4v-4H1z" fill="#fff"/><path d="M4 4.500h10M4 7.500h10M4 10.500h5" stroke="#1b2640"/></svg><b>1</b></div>
  </div>
</div>
<script src="script.js"></script>
</body>
</html>
```
FILE: styles.css
```css
* { box-sizing: border-box; margin: 0; padding: 0; }
html, body { height: 100%; }
body { display: flex; flex-direction: column; overflow: hidden; background: #222; color: #d4d4d4; font: 11px/18px "DejaVu Sans Condensed", "DejaVu Sans", sans-serif; }
button, input, kbd { font: inherit; color: inherit; border: 0; background: none; }
button { display: flex; align-items: center; justify-content: center; flex: none; }
input { min-width: 0; outline: 0; }
svg { flex: none; display: block; overflow: visible; }
ul { list-style: none; }
i, em { font-style: normal; }
.sprite { position: absolute; width: 0; height: 0; }
.i8 { width: 8px; height: 8px; }
.i10 { width: 10px; height: 10px; }
.i12 { width: 12px; height: 12px; }
.i14 { width: 14px; height: 14px; }
.i16 { width: 15px; height: 15px; }
.i18 { width: 18px; height: 18px; }
.i22 { width: 22px; height: 22px; }
.i24 { width: 24px; height: 24px; }

.titlebar { flex: none; display: flex; align-items: center; height: 24px; gap: 5px; padding-left: 3px; background: #fdfdfd; color: #111; border-bottom: 1px solid #484848; font: 11px/18px "Open Sans", sans-serif; }
.blender-color { color: #e0821c; --ring: #fff; --eye: #265787; }
.blender-white { color: #ddd; --ring: #222; --eye: #ddd; }
.b-ring { fill: var(--ring); }
.b-eye { fill: var(--eye); }
.winbtns { display: flex; margin-left: auto; }
.winbtns button { width: 46px; height: 20px; }
.winbtns svg { width: 10px; height: 10px; }
.winbtns button:last-child { width: 48px; }

.topbar { flex: none; display: flex; align-items: center; height: 28px; padding: 0 8px 2px 9px; background: #202020; }
.menus { display: flex; gap: 16px; margin-left: 8px; }
.tabs { display: flex; gap: 2px; margin-left: 24px; align-self: flex-end; }
.tabs button { height: 21px; padding: 0 9px; background: #272727; color: #999; border-radius: 3px 3px 0 0; }
.tabs .on { background: #424242; color: #eee; }
.tabs .add { padding: 0 3px; margin-left: -2px; }
.idrow { display: flex; gap: 7px; margin-left: auto; }
.idblock { display: flex; width: 191px; height: 19px; border-radius: 3px; overflow: hidden; background: #333; }
.idblock input { flex: 1; background: #1a1a1a; padding: 0 8px; color: #ddd; }
.pick { width: 31px; gap: 2px; background: #282828; }
.idblock .lit, .idblock .dim { width: 20px; color: #ccc; }
.lit { background: #555; }
.idblock .dim { color: #666; }

.work { flex: 1; min-height: 0; display: flex; gap: 3px; padding-right: 1px; }
.left { flex: 1; min-width: 0; display: flex; flex-direction: column; gap: 3px; padding-left: 1px; }
.right { flex: none; width: 331px; display: flex; flex-direction: column; gap: 4px; }

.drop { height: 18px; min-width: 31px; gap: 3px; padding: 0 3px; border-radius: 3px; background: #292929; }
.seg { display: flex; border-radius: 3px; overflow: hidden; gap: 1px; }
.seg button, .seg .num { height: 18px; background: #545454; border-radius: 0; }
.seg button { width: 18px; }
.seg .drop { width: 32px; background: #292929; }
.grp { display: flex; align-items: center; gap: 7px; }
.view3d { flex: 1; min-height: 0; display: flex; flex-direction: column; border-radius: 6px; overflow: hidden; }
.viewhead { flex: none; height: 25px; display: grid; grid-template-columns: 1fr auto 1fr; align-items: center; padding: 0 8px; background: #424242; }
.start { gap: 12px; }
.start .modes { margin-left: 2px; }
.middle { padding-right: 20px; }
.end { justify-content: flex-end; }
.blue { background: #5680c2 !important; }
.global { width: 78px; }
.global span { flex: 1; text-align: left; margin-left: 5px; }
.faded { opacity: .6; }
.seg.xyz { margin-left: -4px; }
.xyz button { width: 15px; }
.options { width: 62px; padding: 0 4px 0 7px; }
.options span { flex: 1; text-align: left; }

.canvas { flex: 1; position: relative; background: #393939; overflow: hidden; }
.scene { position: absolute; inset: 0; width: 100%; height: 100%; margin-left: -1px; }
.hint { position: absolute; top: 6px; left: 19px; color: #e2e2e2; text-shadow: 0 1px 1px #111; }
.overlay { position: absolute; top: 35px; left: 8px; display: flex; gap: 28px; }
.toolbar { display: flex; flex-direction: column; gap: 6px; }
.tools { border-radius: 4px; overflow: hidden; background: #2b2b2b; width: 40px; }
.tools button { position: relative; width: 40px; height: 35px; border-bottom: 1px solid #303030; padding-right: 2px; }
.tools .i24 { width: 22px; height: 22px; }
.tools .more::after { content: ""; position: absolute; right: 2px; bottom: 2px; border: 2px solid; border-color: transparent #999 #999 transparent; }
.viewinfo { line-height: 20px; color: #f2f2f2; text-shadow: 0 1px 1px #000; margin-top: -2px; }
.ntab { position: absolute; right: 0; top: 41px; width: 7px; height: 14px; background: #2b2b2b; border-radius: 4px 0 0 4px; }

.timeline { flex: none; height: 73px; display: flex; flex-direction: column; border-radius: 6px; overflow: hidden; background: #363636; position: relative; }
.timehead { flex: none; height: 25px; display: grid; grid-template-columns: 1fr auto 1fr; align-items: center; padding: 0 18px 0 8px; background: #363636; }
.timehead .seg .play { width: 68px; }
.timehead .seg .key { width: 58px; }
.timehead .seg .drop { padding: 0 3px 0 6px; }
.timehead .seg .drop span { flex: 1; text-align: left; }
.tleft { gap: 6px; }
.timehead .menus { margin-left: 1px; color: #ccc; }
.transport { padding-right: 11px; }
.six button { width: 19px; }
.frames { justify-content: flex-end; }
.num { color: #e2e2e2; background: #545454; }
.cur { width: 74px; height: 18px; text-align: center; border-radius: 3px; }
.seg .num { display: flex; padding: 0 14px; justify-content: space-between; }
.num input { width: 24px; text-align: right; }
.st { width: 87px; }
.en { width: 84px; }
.ruler { width: 100%; flex: 1; margin-left: -1px; }
.ruler text { fill: #a8a8a8; text-anchor: middle; }
.scroll { position: absolute; left: 8px; right: 9px; bottom: 2px; height: 9px; border-radius: 5px; background: #656565; }

.outliner { flex: none; height: 311px; display: flex; flex-direction: column; border-radius: 6px; overflow: hidden; background: #282828; }
.outhead { flex: none; display: flex; align-items: center; height: 25px; padding: 0 8px; gap: 7px; background: #3b3b3b; }
.search { display: flex; align-items: center; width: 109px; height: 18px; margin-left: 13px; padding: 0 4px; background: #1d1d1d; border-radius: 3px; }
.search input { width: 80px; }
.filter { margin-left: auto; }
.tree { flex: 1; padding-top: 2px; background: repeating-linear-gradient(#282828 0 20px, #2c2c2c 20px 40px) 0 2px; }
.tree li { display: flex; align-items: center; height: 20px; padding-right: 10px; color: #c8c8c8; }
.r1 { padding-left: 23px; gap: 7px; }
.r2 { padding-left: 26px; gap: 4px; }
.r2 input { appearance: none; width: 10px; height: 10px; margin-left: 7px; background: #ddd; border-radius: 2px; }
.r2 input::after { content: "✔"; display: block; color: #222; font-size: 10px; line-height: 10px; }
.r3 { padding-left: 46px; gap: 4px; }
.tri { color: #ccc; }
.tree .sel { background: #3c5687; color: #eda24c; }
.badge { width: 20px; height: 18px; display: flex; align-items: center; justify-content: center; border-radius: 4px; margin-left: 1px; }
.r3 .badge { margin-left: 2px; }
.grey { background: #4b4b4b; }
.light { background: #6c7da0; }
.r3 .teal { background: #2d7585; color: #1ed4a4; margin-left: 17px; }
.eye { width: 12px; height: 10px; margin-left: auto; }
.tree b { width: 20px; height: 18px; margin-left: 2px; text-align: center; color: #d08850; font: bold 27px/12px "Liberation Serif", serif; }
.curve { margin-left: 18px; }

.props { flex: 1; min-height: 0; display: flex; flex-direction: column; border-radius: 6px; overflow: hidden; }
.prophead { flex: none; display: flex; align-items: center; height: 26px; padding: 0 9px 0 8px; background: #363636; }
.prophead .drop { margin-right: 15px; }
.prophead span { margin-left: 8px; color: #ccc; }
.prophead em { width: 33px; text-align: center; color: #555; }
.prophead .pin { margin-left: auto; }
.propmain { flex: 1; display: flex; }
.ptabs { flex: none; width: 28px; padding: 8px 0 0 2px; display: flex; flex-direction: column; gap: 2px; background: #202020; color: #ccc; }
.ptabs button { width: 26px; height: 26px; background: #292929; border-radius: 3px 0 0 3px; }
.ptabs .gap { margin-top: 8px; }
.ptabs .gap2 { margin-top: 11px; }
.ptabs .orange { color: #d08850; }
.ptabs .on { background: #424242; color: #1cc598; }
.panels { flex: 1; background: #424242; }
.datarow { display: flex; height: 18px; margin: 9px 8px 10px; }
.datarow .drop { border-radius: 3px 0 0 3px; }
.datarow input { flex: 1; background: #1d1d1d; padding-left: 7px; }
.datarow .lit { width: 20px; border-radius: 0 3px 3px 0; }
.panels h3 { display: flex; align-items: center; height: 24px; padding: 0 8px 0 8px; gap: 7px; font-size: 12px; font-weight: normal; color: #c8c8c8; text-shadow: 0 1px 1px #222; }
.panels h3 .i8 { color: #aaa; }
.closed { padding-top: 1px; }
.grip { width: 11px; height: 6px; }
.panels h3 .grip { margin-left: auto; }
.pbody { display: flex; gap: 10px; height: 97px; padding: 8px 8px 9px; background: #363636; }
.list { flex: 1; display: grid; grid-template-columns: 1fr auto 1fr; align-items: end; padding: 0 0 6px 18px; background: #2b2b2b; border: 1px solid #404040; border-radius: 4px; color: #aaa; }
.list .i8 { margin-left: -8px; }
.side { width: 18px; display: flex; flex-direction: column; gap: 1px; color: #ddd; }
.side button { width: 18px; height: 19px; background: #545454; border-radius: 3px; }
.side .off { background: #444; color: #777; }
.side .drop { min-width: 0; background: #282828; margin-top: 7px; }

.status { flex: none; height: 22px; display: flex; align-items: center; justify-content: space-between; padding: 0 31px 0 8px; background: #2d2d2d; border-top: 1px solid #222; color: #a8a8a8; }
.keys { display: flex; gap: 10px; }
.keys div { display: flex; align-items: center; gap: 2px; }
.keys span { margin-left: 5px; }
.keys kbd { width: 18px; height: 18px; display: flex; align-items: center; justify-content: center; border: 1px solid #888; border-radius: 5px; line-height: 16px; }
.stats i { margin: 0 1px; }

.taskbar { flex: none; display: flex; height: 40px; padding-right: 3px; background: linear-gradient(90deg, #21363e 40%, #1c2f3f 65%, #1a2540); }
.taskbar button { width: 48px; margin-right: 1px; border-bottom: 2px solid transparent; }
.taskbar button svg { width: 24px; height: 24px; }
.taskbar .run { width: 40px; margin: 0 5px 0 4px; border-color: #76b9ed; }
.taskbar .startbtn { margin-right: 3px; }
.taskbar .active { width: 48px; margin: 0; background: rgba(255,255,255,.24); }
.tray { margin-left: auto; display: flex; align-items: center; gap: 6px; padding-right: 12px; border-right: 1px solid #76808c; }
.tray svg { width: 18px; height: 18px; }
.clock { display: flex; flex-direction: column; align-items: center; width: 62px; margin: 0 6px 0 -2px; color: #fff; font: 11px/18px "Open Sans", sans-serif; }
.notif { position: relative; width: 26px; }
.notif svg { width: 16px; height: 16px; margin-left: 3px; }
.notif b { position: absolute; left: 10px; top: 7px; width: 16px; height: 16px; border-radius: 50%; border: 1px solid #999; background: #333; color: #fff; text-align: center; font: bold 11px/14px "Open Sans", sans-serif; }
```
FILE: script.js
```js
const path = (d, attrs) => `<path d="${d}" ${attrs}/>`;
const fill = (id, html) => { document.getElementById(id).innerHTML = html; };

// background grid
let g = '';
for (let k = -13; k < 60; k++) if (k) g += `M${552.5 + 42.5 * k} 0V2000`;
for (let k = -20; k < 17; k++) if (k) g += `M0 ${Math.round(676 - 42.93 * k) + .5}H4000`;
fill('grid', path(g, 'stroke="#fff" stroke-opacity=".06" stroke-width="1.500" fill="none"'));

// cylinder edges
const xs = [443, 445, 451, 461, 475, 489, 491, 493, 499, 508, 510, 517, 528, 531, 540, 552, 565, 574, 577, 588, 594, 597, 605, 612, 616, 630, 643, 653, 659];
const soft = [517, 528, 531, 540, 565, 574, 577, 588];
let e = path('M614.500 32V676', 'stroke="#333" stroke-width="5"') + path('M490.500 32V676', 'stroke="#222" stroke-width="3"');
for (const x of xs) {
  e += path(`M${x + .5} 32V676`, `stroke="${soft.includes(x) ? '#333' : '#080808'}"`);
  e += `<circle cx="${x + .5}" cy="32.500" r="2"/><circle cx="${x + .5}" cy="676.500" r="2"/>`;
}
fill('edges', e);

// triangulated numeral
const outer = [[208,203],[258,168],[303,141],[345,121],[400,102],[440,94],[480,94],[520,97],[570,106],[612,121],[652,140],[690,164],[725,193],[752,227],[776,264],[795,306],[808,351],[817,398],[821,450],[818,497],[811,541],[801,586],[785,632],[764,679],[738,729],[707,780],[671,834],[629,891],[582,955],[529,1021],[470,1094]];
const base = [[902,1096],[902,1249],[188,1249],[188,1238],[220,1197],[252,1159],[286,1115],[324,1071],[360,1025],[395,979],[430,933],[464,888],[497,845],[527,800],[555,756]];
const inner = [[577,713],[595,691],[605,670],[613,650],[624,628],[632,610],[640,592],[646,574],[650,556],[654,535],[656,514],[658,492],[659,470],[658,438],[655,410],[647,383],[636,358],[622,335],[606,315],[590,297],[570,283],[552,271],[530,263],[508,258],[485,255],[440,255],[400,263],[375,269],[357,276],[338,289],[316,302],[296,317],[277,333],[254,357],[232,381],[208,409]];
let n = 'M' + [...outer, ...base, ...inner].join('L') + 'Z';
for (const p of inner.slice(25)) n += `M208 203L${p}`;
const seg = s => s.split(';').forEach(l => { n += 'M' + l.split(' ').join('L'); });
seg('208,203 752,227 485,255 776,264;776,264 508,258;776,264 530,263 795,306;552,271 795,306;570,283 795,306 590,297;795,306 606,315 808,351;622,335 808,351 636,358 817,398;647,383 817,398 655,410 821,450;658,438 821,450 659,470 818,497;658,492 818,497 656,514 811,541;654,535 811,541 650,556 801,586;646,574 801,586 640,592 785,632;640,592 801,586;632,610 785,632 624,628;785,632 613,650 764,679;605,670 764,679 595,691 738,729;577,713 738,729 555,756 707,780 527,800 671,834 497,845 629,891 464,888;629,891 430,933 582,955 395,979 529,1021 360,1025 470,1094 324,1071;470,1094 286,1115 902,1096;286,1115 902,1249 252,1159;902,1249 220,1197;902,1249 188,1238');
seg('208,203 725,193 240,186;725,193 258,168 690,164 280,155;690,164 303,141 652,140 324,130;652,140 345,121 612,121 372,111;612,121 400,102 570,106;400,102 520,97;372,111 570,106;240,186 700,190;258,168 670,160;303,141 630,136;345,121 600,119;372,113 590,117;430,97 540,101');
fill('numeral', path(n, ''));

// hatched dot: chords fan slightly so they merge towards the middle
let d = '';
for (let y = -31; y <= 31; y += 3) {
  const w = Math.sqrt(33 * 33 - y * y), v = Math.min(32, y + 1), w2 = Math.sqrt(33 * 33 - v * v), s = y % 2 ? 8 : 15;
  d += `M${903.5 - w} ${618.5 + y}L${903.5 + w2} ${618.5 + v}`;
  d += `M${903.5 - s} ${620 + y}L${903.5 + Math.min(s + 4, w)} ${619.5 + y}`;
}
fill('dot', path(d, ''));

// timeline ruler
let r = '<rect width="100%" height="23" fill="#282828"/><rect x="58" y="23" width="1469" height="30" fill="#424242"/><rect x="0" y="23" width="58" height="30" fill="#333"/>';
for (let f = 5; f <= 250; f += 5) {
  const x = Math.round(53 + f * 5.897) + .5, major = f % 10 === 0;
  r += path(`M${x} 23V48`, `stroke="${f === 250 ? '#000' : major ? '#222' : '#383838'}"`);
  if (major) r += `<text x="${x - 2}" y="16">${f}</text>`;
}
r += '<path d="M59 20V48" stroke="#5680c2" stroke-width="2"/><rect x="46" y="2" width="25" height="19" rx="4" fill="#5680c2"/><text x="58" y="16" style="fill:#fff">1</text>';
r += '<path d="M0 14h3q4 1 4 4v6q0 4-4 4H0z" fill="#222"/><path d="M2 18l3 3-3 3" fill="none" stroke="#aaa"/>';
r += '<path d="M1585 14h-3q-4 1-4 4v6q0 4 4 4h3z" fill="#222"/><path d="M1584 18l-3 3 3 3" fill="none" stroke="#aaa"/>';
fill('ruler', r);
```
